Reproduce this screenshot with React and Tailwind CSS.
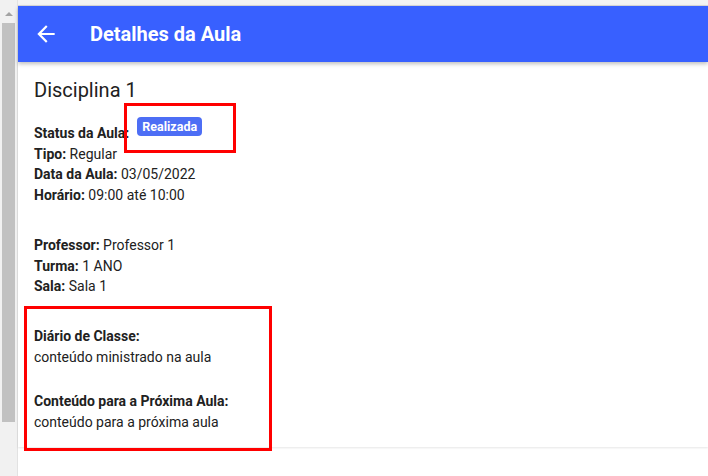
import React from "react";

const Row = ({ label, value, children }) => (
  <div className="leading-[20.5px]">
    <span className="font-bold">{label}</span>
    {value ? <span> {value}</span> : null}
    {children}
  </div>
);

const App = () => {
  return (
    <div
      className="relative flex w-[708px] h-[476px] overflow-hidden bg-white text-[14px] text-[#212121]"
      style={{ fontFamily: "Roboto, 'Liberation Sans', sans-serif" }}
    >
      {/* fake scrollbar */}
      <div className="flex flex-col items-center w-[18px] shrink-0 bg-[#f1f1f1] border-r border-[#e2e2e2]">
        <div className="mt-[12px] w-0 h-0 border-l-[4px] border-r-[4px] border-b-[4px] border-l-transparent border-r-transparent border-b-[#a3a3a3]" />
        <div className="mt-[7px] w-[13px] h-[399px] bg-[#c1c1c1]" />
      </div>

      <div className="flex flex-col flex-1">
        <div className="h-[6px] bg-[#f3f3f3] border-b border-[#d9d9d9]" />
        <header className="flex items-center h-[56px] bg-[#3860ff] pl-[15px] shadow-[0_2px_4px_rgba(0,0,0,0.25)] z-10">
          <svg viewBox="0 0 24 24" className="w-[26px] h-[26px] fill-white">
            <path d="M20 11H7.83l5.59-5.59L12 4l-8 8 8 8 1.41-1.41L7.83 13H20v-2z" />
          </svg>
          <h1 className="ml-[31px] text-[20px] font-bold text-white">Detalhes da Aula</h1>
        </header>

        <div className="px-4 pt-3 pb-[15px] bg-white shadow-[0_1px_2px_rgba(0,0,0,0.1)]">
          <h2 className="text-[20px] leading-8">Disciplina 1</h2>

          <div className="mt-[17px]">
            <Row label="Status da Aula:">
              <span className="relative -top-[6px] inline-block align-top ml-[8px] h-[19px] px-[5px] rounded-[4px] bg-[#4d6ef5] text-white text-[12.5px] font-bold leading-[19px]">
                Realizada
              </span>
            </Row>
            <Row label="Tipo:" value="Regular" />
            <Row label="Data da Aula:" value="03/05/2022" />
            <Row label="Horário:" value="09:00 até 10:00" />
          </div>

          <div className="mt-[30px]">
            <Row label="Professor:" value="Professor 1" />
            <Row label="Turma:" value="1 ANO" />
            <Row label="Sala:" value="Sala 1" />
          </div>

          <div className="mt-[29.5px]">
            <Row label="Diário de Classe:" />
            <div className="leading-[20.5px]">conteúdo ministrado na aula</div>
          </div>

          <div className="mt-[24px]">
            <Row label="Conteúdo para a Próxima Aula:" />
            <div className="leading-[20.5px]">conteúdo para a próxima aula</div>
          </div>
        </div>
      </div>

      {/* annotation boxes */}
      <div className="absolute left-[124px] top-[103px] w-[112px] h-[50px] border-[3px] border-[#ff0000]" />
      <div className="absolute left-[24px] top-[306px] w-[248px] h-[145px] border-[3px] border-[#ff0000]" />
    </div>
  );
};

export default App;
